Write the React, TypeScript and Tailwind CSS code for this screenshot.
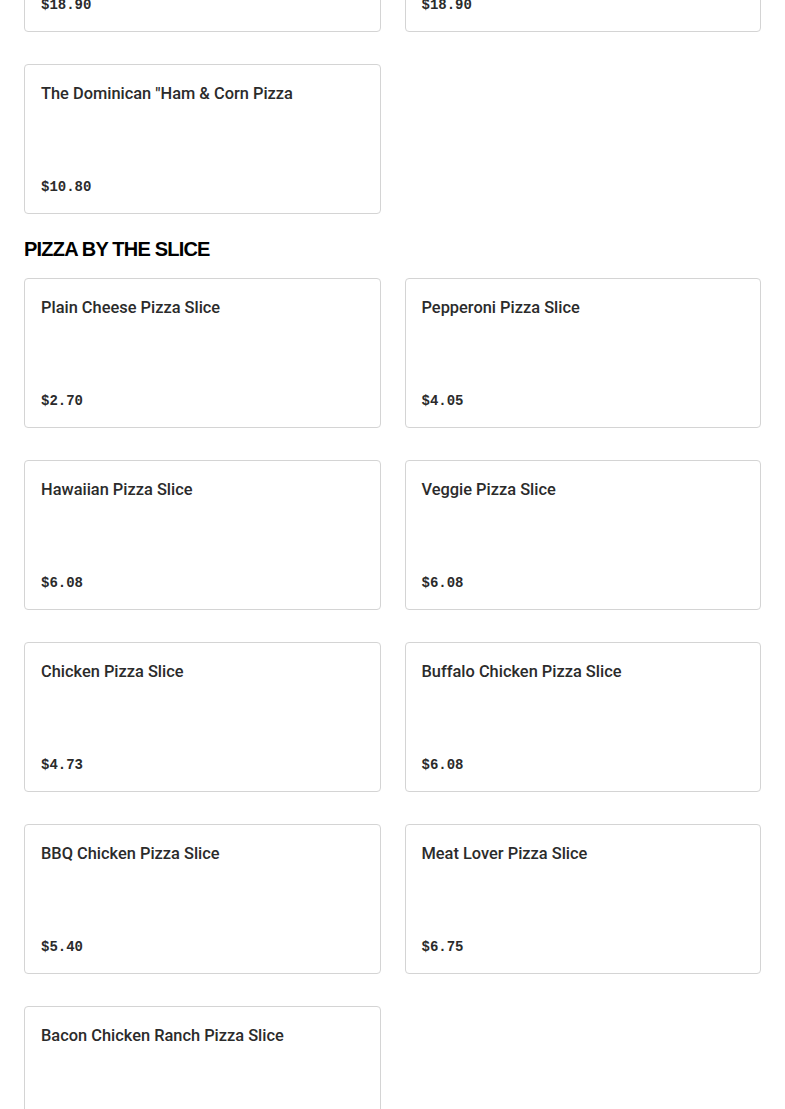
type Item = { name: string; price: string };

const sliceItems: Item[] = [
  { name: "Plain Cheese Pizza Slice", price: "$2.70" },
  { name: "Pepperoni Pizza Slice", price: "$4.05" },
  { name: "Hawaiian Pizza Slice", price: "$6.08" },
  { name: "Veggie Pizza Slice", price: "$6.08" },
  { name: "Chicken Pizza Slice", price: "$4.73" },
  { name: "Buffalo Chicken Pizza Slice", price: "$6.08" },
  { name: "BBQ Chicken Pizza Slice", price: "$5.40" },
  { name: "Meat Lover Pizza Slice", price: "$6.75" },
  { name: "Bacon Chicken Ranch Pizza Slice", price: "$6.08" },
];

function MenuCard({ item }: { item: Item }) {
  return (
    <div className="h-[150px] rounded border border-[#d4d4d4] bg-white px-4 pt-[17px] pb-[14px] flex flex-col justify-between">
      <h3
        className="text-[16.4px] leading-6 font-medium text-[#2b2b2b]"
        style={{ fontFamily: "Roboto, 'Liberation Sans', sans-serif" }}
      >
        {item.name}
      </h3>
      <span
        className="text-[14px] leading-6 font-bold text-[#2b2b2b]"
        style={{ fontFamily: "'Liberation Mono', monospace" }}
      >
        {item.price}
      </span>
    </div>
  );
}

export default function App() {
  return (
    <div className="bg-white min-h-screen px-6 overflow-hidden h-[1109px]">
      <div className="-mt-[118px] grid grid-cols-2 gap-x-6 gap-y-8">
        <MenuCard item={{ name: "Pizza", price: "$18.90" }} />
        <MenuCard item={{ name: "Pizza", price: "$18.90" }} />
        <MenuCard item={{ name: 'The Dominican "Ham & Corn Pizza', price: "$10.80" }} />
      </div>

      <h2
        className="mt-[21px] mb-[15px] text-[20px] leading-7 font-black tracking-[-0.04em] text-black uppercase"
        style={{ fontFamily: "'Liberation Sans', Arial, sans-serif" }}
      >
        Pizza by the Slice
      </h2>

      <div className="grid grid-cols-2 gap-x-6 gap-y-8">
        {sliceItems.map((item) => (
          <MenuCard key={item.name} item={item} />
        ))}
      </div>
    </div>
  );
}
